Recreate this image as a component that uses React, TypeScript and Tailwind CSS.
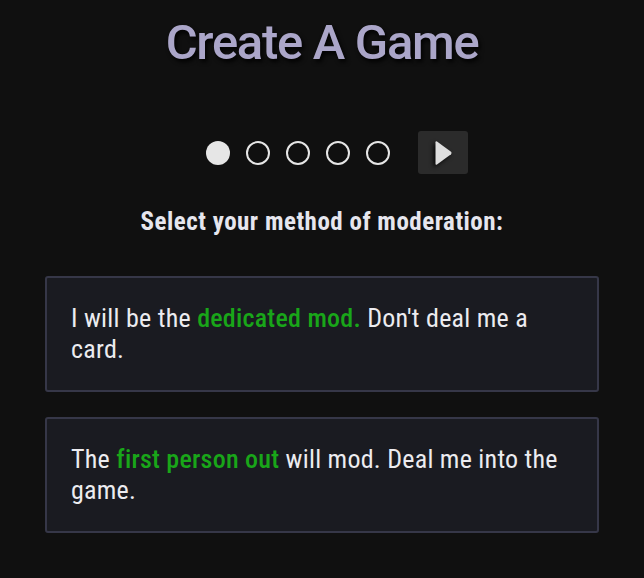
import React from "react";

export default function App() {
  const cond = { fontFamily: '"Roboto Condensed", Roboto, sans-serif' };
  const cardCls =
    "h-[116px] rounded-[3px] border-2 border-[#363748] bg-[#1a1b21] pl-[24px] pr-[20px] pt-[25px] text-[26px] leading-[31px] tracking-[0.25px] text-[#ececf0]";
  return (
    <div className="min-h-[578px] w-full bg-[#101010] flex flex-col items-center" style={cond}>
      <h1
        className="mt-[11px] h-[64px] leading-[64px] text-[49px] font-medium tracking-[-1.3px] text-[#aba6c9] [text-shadow:2px_3px_4px_rgba(0,0,0,0.9)]"
        style={{ fontFamily: 'Roboto, "Open Sans", sans-serif' }}
      >
        Create A Game
      </h1>
      <div className="mt-[56px] flex items-center h-[43px] pl-[30px]">
        <div className="flex items-center gap-[16px]">
          <span className="block w-[24px] h-[24px] rounded-full bg-[#e6e6e6]" />
          <span className="block w-[24px] h-[24px] rounded-full border-2 border-[#e6e6e6]" />
          <span className="block w-[24px] h-[24px] rounded-full border-2 border-[#e6e6e6]" />
          <span className="block w-[24px] h-[24px] rounded-full border-2 border-[#e6e6e6]" />
          <span className="block w-[24px] h-[24px] rounded-full border-2 border-[#e6e6e6]" />
        </div>
        <button className="ml-[28px] w-[50px] h-[43px] rounded-[3px] bg-[#2b2b2b] flex items-center justify-center">
          <svg width="18" height="26" viewBox="0 0 18 26" className="[filter:drop-shadow(-2px_2px_2px_rgba(0,0,0,0.85))]">
            <path d="M1.5 2.2 Q1.5 0.6 3 1.4 L17 11.8 Q18 13 17 14.2 L3 24.6 Q1.5 25.4 1.5 23.8 Z" fill="#dedede" />
          </svg>
        </button>
      </div>
      <p className="mt-[33px] text-[25px] font-bold tracking-[0.5px] text-[#e6e6ee] leading-[30px]">
        Select your method of moderation:
      </p>
      <div className="mt-[39px] w-[554px] flex flex-col gap-[25px]">
        <div className={cardCls}>
          I will be the <span className="font-medium text-[#19a619]">dedicated mod.</span> Don't deal me a
          <br />
          card.
        </div>
        <div className={cardCls}>
          The <span className="font-medium text-[#19a619]">first person out</span> will mod. Deal me into the
          <br />
          game.
        </div>
      </div>
    </div>
  );
}
